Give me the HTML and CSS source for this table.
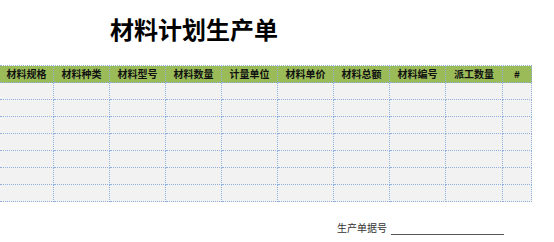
FILE: index.html
```html
<!DOCTYPE html>
<html lang="zh">
<head>
<meta charset="utf-8">
<link rel="stylesheet" href="styles.css">
</head>
<body>
<div class="page">
  <h1 class="title">材料计划生产单</h1>
  <div class="grid">
    <div class="hd">材料规格</div>
    <div class="hd">材料种类</div>
    <div class="hd">材料型号</div>
    <div class="hd">材料数量</div>
    <div class="hd">计量单位</div>
    <div class="hd">材料单价</div>
    <div class="hd">材料总额</div>
    <div class="hd">材料编号</div>
    <div class="hd">派工数量</div>
    <div class="hd">#</div>
    <div></div><div></div><div></div><div></div><div></div><div></div><div></div><div></div><div></div><div></div>
    <div></div><div></div><div></div><div></div><div></div><div></div><div></div><div></div><div></div><div></div>
    <div></div><div></div><div></div><div></div><div></div><div></div><div></div><div></div><div></div><div></div>
    <div></div><div></div><div></div><div></div><div></div><div></div><div></div><div></div><div></div><div></div>
    <div></div><div></div><div></div><div></div><div></div><div></div><div></div><div></div><div></div><div></div>
    <div></div><div></div><div></div><div></div><div></div><div></div><div></div><div></div><div></div><div></div>
    <div></div><div></div><div></div><div></div><div></div><div></div><div></div><div></div><div></div><div></div>
  </div>
  <div class="footer">
    <span class="label">生产单据号</span>
    <span class="line"></span>
  </div>
</div>
</body>
</html>
```
FILE: styles.css
```css
html, body {
  margin: 0;
  padding: 0;
  background: #ffffff;
}
.page {
  width: 554px;
  height: 242px;
  font-family: "Noto Sans CJK SC", "Noto Sans", sans-serif;
  overflow: hidden;
}
.title {
  margin: 14px 0 0 110px;
  height: 30px;
  font-size: 24px;
  line-height: 30px;
  font-weight: 700;
  color: #000;
  letter-spacing: 0;
}
.grid {
  margin-top: 21px;
  width: 532px;
  display: grid;
  grid-template-columns: 54px 56px 56px 56px 56px 56px 56px 56px 57px 29px;
  grid-auto-rows: 17px;
  border-top: 1px dotted #8fb0dc;
}
.grid > div {
  box-sizing: border-box;
  border-right: 1px dotted #8fb0dc;
  border-bottom: 1px dotted #8fb0dc;
  background: #f2f2f2;
}
.grid > .hd {
  background: #9bbb59;
  font-size: 10px;
  font-weight: 700;
  line-height: 16px;
  text-align: center;
  color: #111;
}
.footer {
  margin: 19px 0 0 337px;
  display: flex;
  align-items: flex-end;
  gap: 4px;
}
.label {
  font-size: 10px;
  line-height: 14px;
  color: #333;
}
.line {
  width: 113px;
  height: 0;
  border-bottom: 1px solid #555;
}
```
